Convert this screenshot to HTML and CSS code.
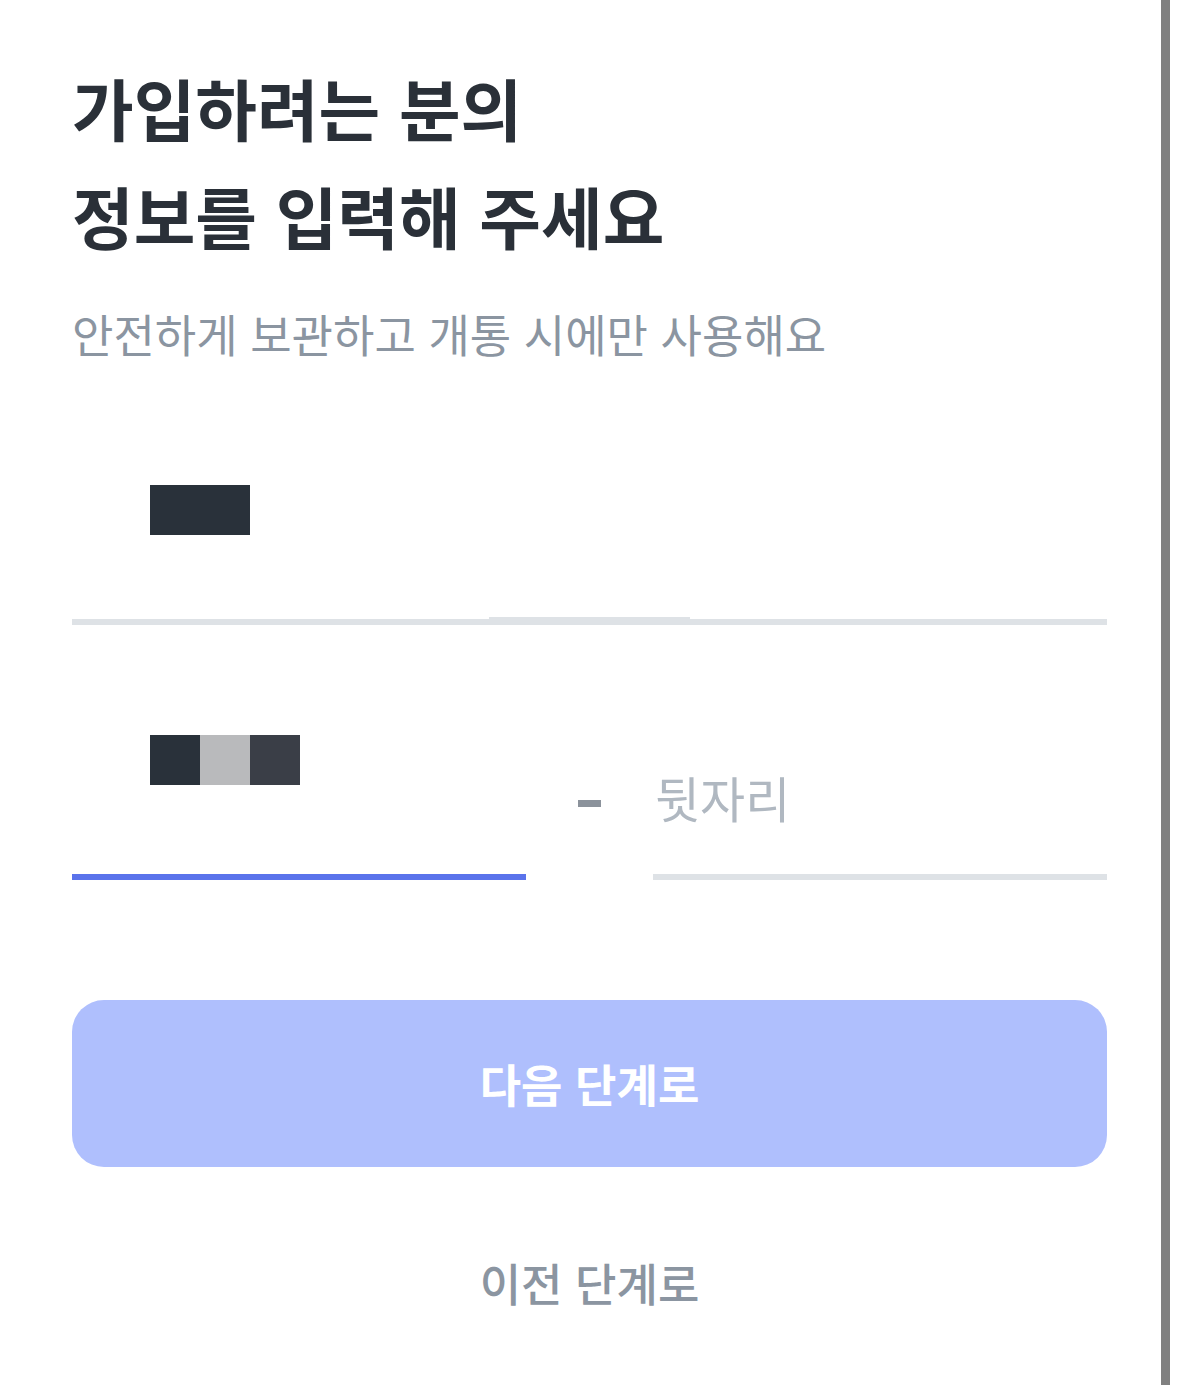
FILE: index.html
```html
<!DOCTYPE html>
<html lang="ko">
<head>
  <meta charset="UTF-8">
  <meta name="viewport" content="width=device-width, initial-scale=1.0">
  <title>가입 정보 입력</title>
  <link rel="stylesheet" href="styles.css">
</head>
<body>
  <div class="page">
    <main class="content">
      <h1 class="title">가입하려는 분의<br>정보를 입력해 주세요</h1>
      <p class="subtitle">안전하게 보관하고 개통 시에만 사용해요</p>

      <div class="field field-name">
        <div class="mask">
          <span class="px px-dark"></span><span class="px px-dark"></span>
        </div>
      </div>

      <div class="id-row">
        <div class="field field-front">
          <div class="mask">
            <span class="px px-dark"></span><span class="px px-light"></span><span class="px px-mid"></span>
          </div>
        </div>
        <span class="dash"></span>
        <div class="field field-back">
          <input type="text" class="back-input" placeholder="뒷자리">
        </div>
      </div>

      <button type="button" class="btn-next">다음 단계로</button>
      <button type="button" class="btn-prev">이전 단계로</button>
    </main>
    <div class="scrollbar"></div>
  </div>
</body>
</html>
```

FILE: styles.css
```css
body {
  margin: 0;
  padding: 0;
  background-color: #ffffff;
  font-family: "Noto Sans CJK KR", "Noto Sans", sans-serif;
}

.page {
  display: flex;
  min-height: 100vh;
}

.content {
  flex: 1;
  padding: 53px 54px 0 72px;
}

.scrollbar {
  width: 9px;
  margin-right: 9px;
  background-color: #808080;
}

.title {
  margin: 0;
  font-size: 67px;
  line-height: 108px;
  font-weight: 700;
  color: #2a3038;
}

.subtitle {
  margin: 35px 0 0;
  font-size: 45px;
  line-height: 60px;
  color: #8b95a1;
}

/* input fields */
.field {
  position: relative;
  border-bottom: 6px solid #dee2e6;
}

.field-name {
  margin-top: 76px;
  padding-top: 45px;
  height: 134px;
}

.field-name::after {
  content: "";
  position: absolute;
  left: 417px;
  width: 201px;
  bottom: 0;
  height: 2px;
  background-color: #dee2e6;
}

.mask {
  display: flex;
  margin-left: 78px;
}

.px {
  width: 50px;
  height: 50px;
}

.px-dark { background-color: #29313a; }
.px-light { background-color: #b9babc; }
.px-mid { background-color: #3a3e47; }

.id-row {
  display: grid;
  grid-template-columns: 1fr 127px 1fr;
  align-items: end;
  margin-top: 110px;
}

.field-front {
  height: 139px;
  border-bottom-color: #5a73eb;
}

.field-back {
  height: 139px;
  display: flex;
  align-items: flex-end;
}

.back-input {
  width: 100%;
  margin: 0 0 47px;
  padding: 0 0 0 2px;
  border: none;
  outline: none;
  background: transparent;
  font-family: inherit;
  font-size: 49px;
  line-height: 60px;
  height: 60px;
  color: #2a3038;
}

.back-input::placeholder {
  color: #b0b8c1;
}

.dash {
  justify-self: center;
  width: 23px;
  height: 7px;
  margin-bottom: 73px;
  background-color: #8b929b;
}

/* buttons */
.btn-next,
.btn-prev {
  display: block;
  width: 100%;
  border: none;
  font-family: inherit;
  cursor: pointer;
}

.btn-next {
  margin-top: 120px;
  height: 167px;
  border-radius: 32px;
  background-color: #afbffd;
  color: #ffffff;
  font-size: 45px;
  font-weight: 700;
}

.btn-prev {
  margin-top: 82px;
  height: 60px;
  background: transparent;
  color: #8b95a1;
  font-size: 45px;
  font-weight: 500;
}
```
